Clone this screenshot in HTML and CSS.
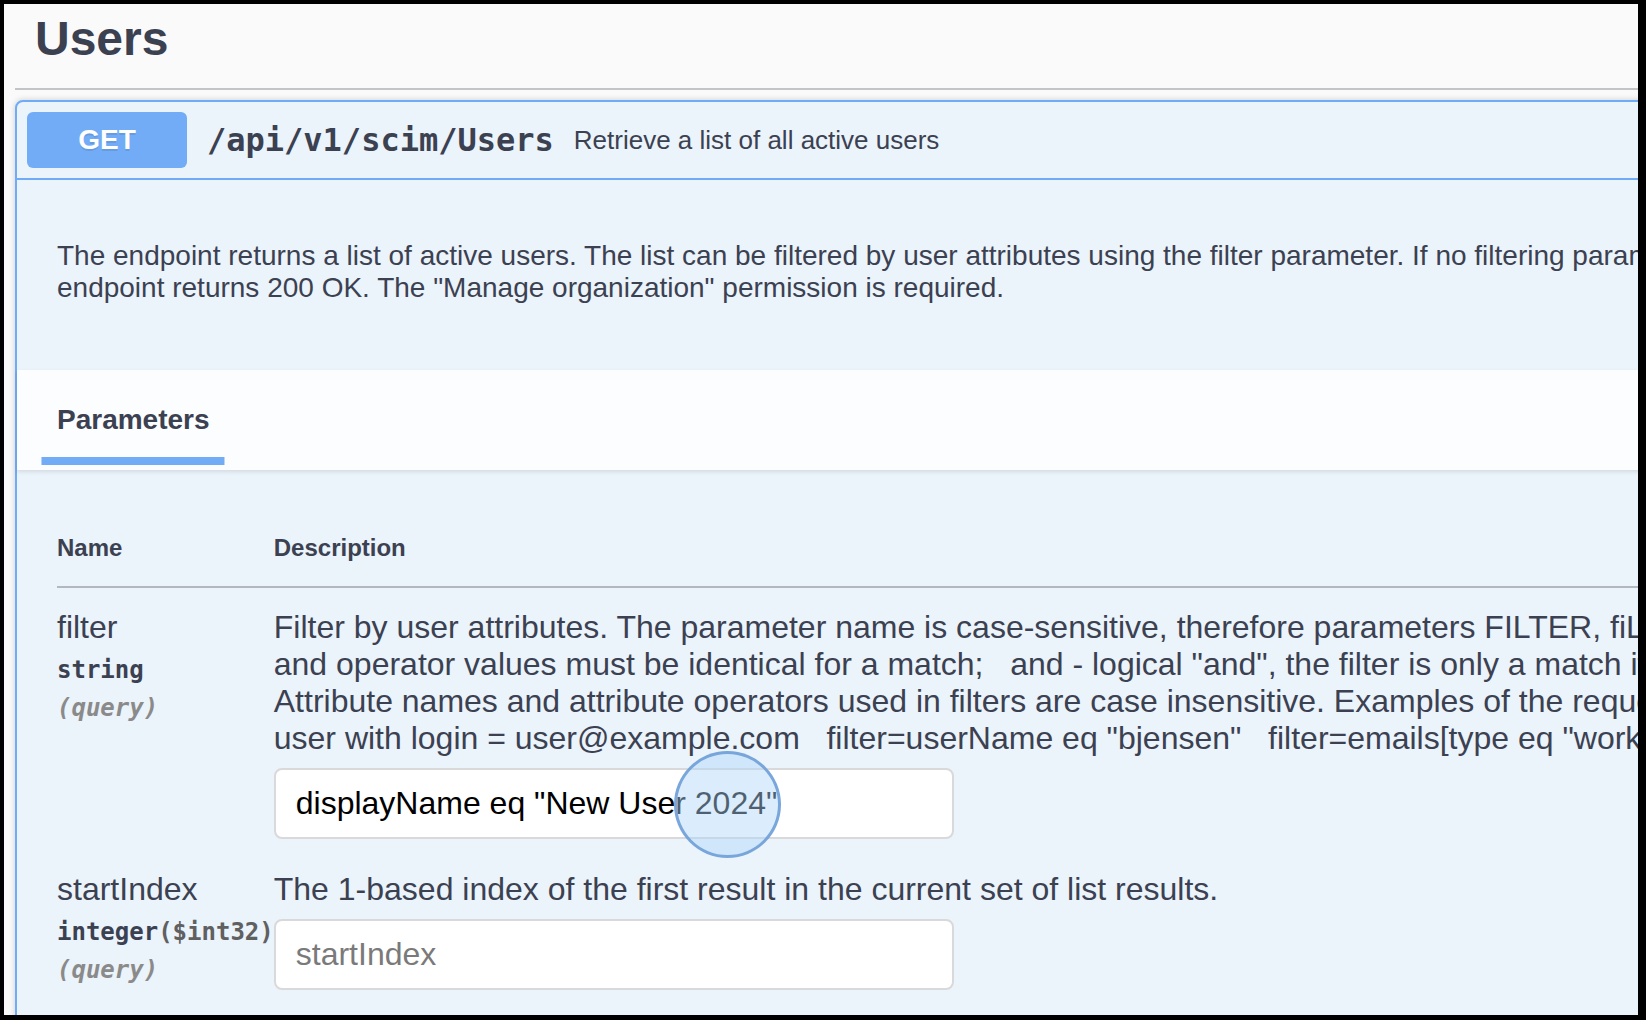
FILE: index.html
```html
<!DOCTYPE html>
<html lang="en">
<head>
<meta charset="utf-8">
<title>Users - SCIM API</title>
<link rel="stylesheet" href="styles.css">
</head>
<body>
<div class="viewport">
  <div class="wrapper">
    <h3 class="tag">Users</h3>
    <div class="opblock">
      <div class="summary">
        <span class="method">GET</span>
        <span class="path">/api/v1/scim/Users</span>
        <span class="summary-desc">Retrieve a list of all active users</span>
      </div>
      <div class="desc">
        <p>The endpoint returns a list of active users. The list can be filtered by user attributes using the filter parameter. If no filtering parameters are specified, the<br>endpoint returns 200 OK. The "Manage organization" permission is required.</p>
      </div>
      <div class="section-header">
        <h4 class="tab"><span class="tab-label">Parameters</span></h4>
      </div>
      <div class="table-wrap">
        <table class="params">
          <thead>
            <tr><th class="col-name">Name</th><th class="col-desc">Description</th></tr>
          </thead>
          <tbody>
            <tr>
              <td class="col-name">
                <div class="param-name">filter</div>
                <div class="param-type">string</div>
                <div class="param-in">(query)</div>
              </td>
              <td class="col-desc">
                <div class="param-desc">Filter by user attributes. The parameter name is case-sensitive, therefore parameters FILTER, fiLTER and similar are not supported. Attribute names<br>and operator values must be identical for a match;&nbsp;&nbsp; and - logical "and", the filter is only a match if both expressions evaluate to true.<br>Attribute names and attribute operators used in filters are case insensitive. Examples of the request parameter for a<br>user with login = user@example.com&nbsp;&nbsp; filter=userName eq "bjensen"&nbsp;&nbsp; filter=emails[type eq "work" and value co "@example.com"]</div>
                <input class="field" type="text" value="displayName eq &quot;New User 2024&quot;">
              </td>
            </tr>
            <tr>
              <td class="col-name">
                <div class="param-name">startIndex</div>
                <div class="param-type">integer<span class="fmt">($int32)</span></div>
                <div class="param-in">(query)</div>
              </td>
              <td class="col-desc">
                <div class="param-desc">The 1-based index of the first result in the current set of list results.</div>
                <input class="field" type="text" placeholder="startIndex">
              </td>
            </tr>
          </tbody>
        </table>
      </div>
    </div>
  </div>
  <div class="click-marker"></div>
</div>
</body>
</html>
```

FILE: styles.css
```css
html, body {
  margin: 0;
  padding: 0;
}

body {
  background: #000;
  width: 1646px;
  height: 1020px;
  box-sizing: border-box;
  padding: 4px 8px 5px 4px;
  font-family: "Liberation Sans", Arial, Helvetica, sans-serif;
  color: #3b4151;
}

.viewport {
  position: relative;
  width: 1634px;
  height: 1011px;
  overflow: hidden;
  background: #fafafa;
}

.wrapper {
  width: 2300px;
  padding-left: 11px;
}

.tag {
  margin: 0;
  padding: 7px 20px 22px 20px;
  font-size: 48px;
  font-weight: 700;
  line-height: normal;
  color: #3b4151;
  border-bottom: 2px solid #c2c4c8;
}

.opblock {
  margin-top: 10px;
  border: 2px solid #6fabf6;
  border-radius: 8px;
  background: #ebf3fb;
  box-shadow: 0 0 6px rgba(0, 0, 0, 0.19);
}

.summary {
  display: flex;
  align-items: center;
  padding: 10px;
  border-bottom: 2px solid #6fabf6;
}

.method {
  display: flex;
  align-items: center;
  justify-content: center;
  width: 160px;
  height: 56px;
  border-radius: 6px;
  background: #72acf7;
  color: #fff;
  font-size: 28px;
  font-weight: 700;
  text-shadow: 0 2px 0 rgba(0, 0, 0, 0.1);
}

.path {
  padding: 0 20px;
  font-family: "DejaVu Sans Mono", "Liberation Mono", monospace;
  font-size: 32px;
  font-weight: 700;
  color: #3b4151;
}

.summary-desc {
  font-size: 26px;
  color: #3b4151;
}

.desc {
  padding: 60px 40px 66px;
}

.desc p {
  margin: 0;
  font-size: 28px;
  line-height: normal;
  white-space: nowrap;
}

.section-header {
  display: flex;
  align-items: center;
  box-sizing: border-box;
  min-height: 100px;
  padding: 16px 40px;
  background: rgba(255, 255, 255, 0.8);
  box-shadow: 0 2px 4px rgba(0, 0, 0, 0.1);
}

.tab {
  margin: 0;
  font-size: 28px;
  font-weight: 700;
  line-height: normal;
}

.tab-label {
  position: relative;
}

.tab-label::after {
  content: "";
  position: absolute;
  left: 50%;
  bottom: -30px;
  width: 120%;
  height: 8px;
  transform: translateX(-50%);
  background: #72acf7;
}

.table-wrap {
  padding: 40px;
}

.params {
  width: 100%;
  border-collapse: collapse;
}

.params th {
  padding: 24px 0;
  text-align: left;
  font-size: 24px;
  font-weight: 700;
  line-height: normal;
  border-bottom: 2px solid #b3b8c0;
}

.params td {
  vertical-align: top;
  padding: 21px 0 0;
}

.col-name {
  width: 218px;
}

.param-name {
  font-size: 32px;
  line-height: normal;
}

.param-type {
  padding: 10px 0;
  font-family: "DejaVu Sans Mono", "Liberation Mono", monospace;
  font-size: 24px;
  font-weight: 700;
  line-height: normal;
  white-space: nowrap;
}

.fmt {
  color: #606060;
}

.param-in {
  font-family: "DejaVu Sans Mono", "Liberation Mono", monospace;
  font-size: 24px;
  font-weight: 700;
  font-style: italic;
  line-height: normal;
  color: #8a8a8a;
}

.param-desc {
  font-size: 32px;
  line-height: normal;
  white-space: nowrap;
}

.field {
  display: block;
  box-sizing: border-box;
  width: 680px;
  height: 71px;
  margin: 11px 0;
  padding: 0 20px;
  border: 2px solid #d9d9d9;
  border-radius: 8px;
  background: #fff;
  font-family: "Liberation Sans", Arial, Helvetica, sans-serif;
  font-size: 32px;
  color: #000;
  outline: none;
}

.field::placeholder {
  color: #7a7a7a;
}

.click-marker {
  position: absolute;
  left: 670px;
  top: 747px;
  width: 107px;
  height: 107px;
  box-sizing: border-box;
  border: 3px solid rgba(110, 158, 215, 0.9);
  border-radius: 50%;
  background: rgba(175, 215, 248, 0.45);
}
```
